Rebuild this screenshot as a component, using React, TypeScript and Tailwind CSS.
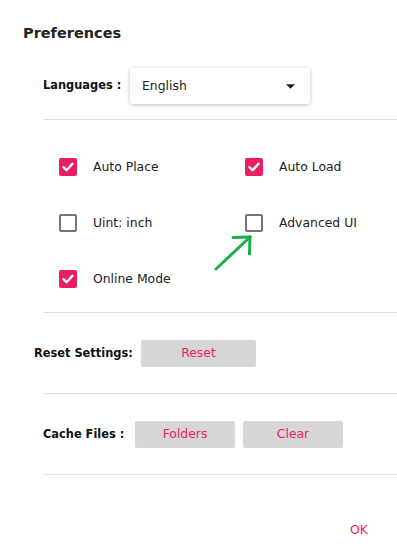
const font = { fontFamily: '"DejaVu Sans", Verdana, sans-serif' };

function Check({ checked, label }: { checked: boolean; label: string }) {
  return (
    <div className="flex items-center h-[18px]">
      {checked ? (
        <span className="shrink-0 w-[18px] h-[18px] rounded-[2px] bg-[#e91e63] flex items-center justify-center">
          <svg width="14" height="14" viewBox="0 0 14 14">
            <path d="M2.5 7.2 L5.6 10.2 L11.5 3.8" stroke="white" strokeWidth="2.4" fill="none" strokeLinecap="round" strokeLinejoin="round" />
          </svg>
        </span>
      ) : (
        <span className="shrink-0 w-[18px] h-[18px] rounded-[2px] border-2 border-[#757575] bg-white" />
      )}
      <span className="ml-[16px] text-[12.4px] text-[#222] whitespace-nowrap">{label}</span>
    </div>
  );
}

export default function App() {
  return (
    <div style={font} className="relative w-[397px] h-[558px] bg-white overflow-hidden">
      <div className="pt-[23px] pl-[23px] text-[14.5px] font-bold text-[#222] leading-[20px]">Preferences</div>

      {/* Languages */}
      <div className="flex items-center mt-[25px] pl-[43px] h-[36px]">
        <span className="shrink-0 whitespace-nowrap text-[11.4px] font-bold text-[#111] w-[87px]">Languages :</span>
        <div className="shrink-0 w-[180px] h-[36px] rounded-[3px] bg-white shadow-[0_1px_4px_rgba(0,0,0,0.25)] flex items-center justify-between pl-[12px] pr-[15px]">
          <span className="text-[12.4px] text-[#222]">English</span>
          <svg width="9" height="5" viewBox="0 0 10 5">
            <path d="M0 0 L10 0 L5 5 Z" fill="#222" />
          </svg>
        </div>
      </div>

      <div className="ml-[43px] mt-[15px] h-px bg-[#e0e0e0]" />

      {/* Options */}
      <div className="grid grid-cols-[186px_1fr] gap-y-[38px] pl-[59px] mt-[38px]">
        <Check checked label="Auto Place" />
        <Check checked label="Auto Load" />
        <Check checked={false} label="Uint: inch" />
        <Check checked={false} label="Advanced UI" />
        <Check checked label="Online Mode" />
      </div>

      <div className="ml-[43px] mt-[24px] h-px bg-[#e0e0e0]" />

      {/* Reset */}
      <div className="flex items-center mt-[27px] pl-[34px] h-[27px]">
        <span className="shrink-0 whitespace-nowrap text-[11.4px] font-bold text-[#111] w-[107px]">Reset Settings:</span>
        <button className="shrink-0 w-[115px] h-[27px] bg-[#d6d6d6] rounded-[2px] text-[12.4px] text-[#e91e63]">Reset</button>
      </div>

      <div className="ml-[43px] mt-[26px] h-px bg-[#e0e0e0]" />

      {/* Cache */}
      <div className="flex items-center mt-[27px] pl-[43px] h-[27px]">
        <span className="shrink-0 whitespace-nowrap text-[11.4px] font-bold text-[#111] w-[92px]">Cache Files :</span>
        <button className="shrink-0 w-[100px] h-[27px] bg-[#d6d6d6] rounded-[2px] text-[12.4px] text-[#e91e63]">Folders</button>
        <button className="shrink-0 ml-[8px] w-[100px] h-[27px] bg-[#d6d6d6] rounded-[2px] text-[12.4px] text-[#e91e63]">Clear</button>
      </div>

      <div className="ml-[43px] mt-[26px] h-px bg-[#e0e0e0]" />

      <div className="flex justify-end pr-[29px] mt-[45px]">
        <span className="text-[12.4px] text-[#e91e63] leading-[20px]">OK</span>
      </div>

      {/* annotation arrow */}
      <svg className="absolute left-0 top-0 pointer-events-none" width="397" height="558">
        <g stroke="#1aad4b" strokeWidth="3" strokeLinecap="round" fill="none">
          <line x1="216" y1="269" x2="250" y2="237" />
          <line x1="233" y1="237.5" x2="250" y2="237" />
          <line x1="250" y1="237" x2="249.5" y2="254" />
        </g>
      </svg>
    </div>
  );
}
